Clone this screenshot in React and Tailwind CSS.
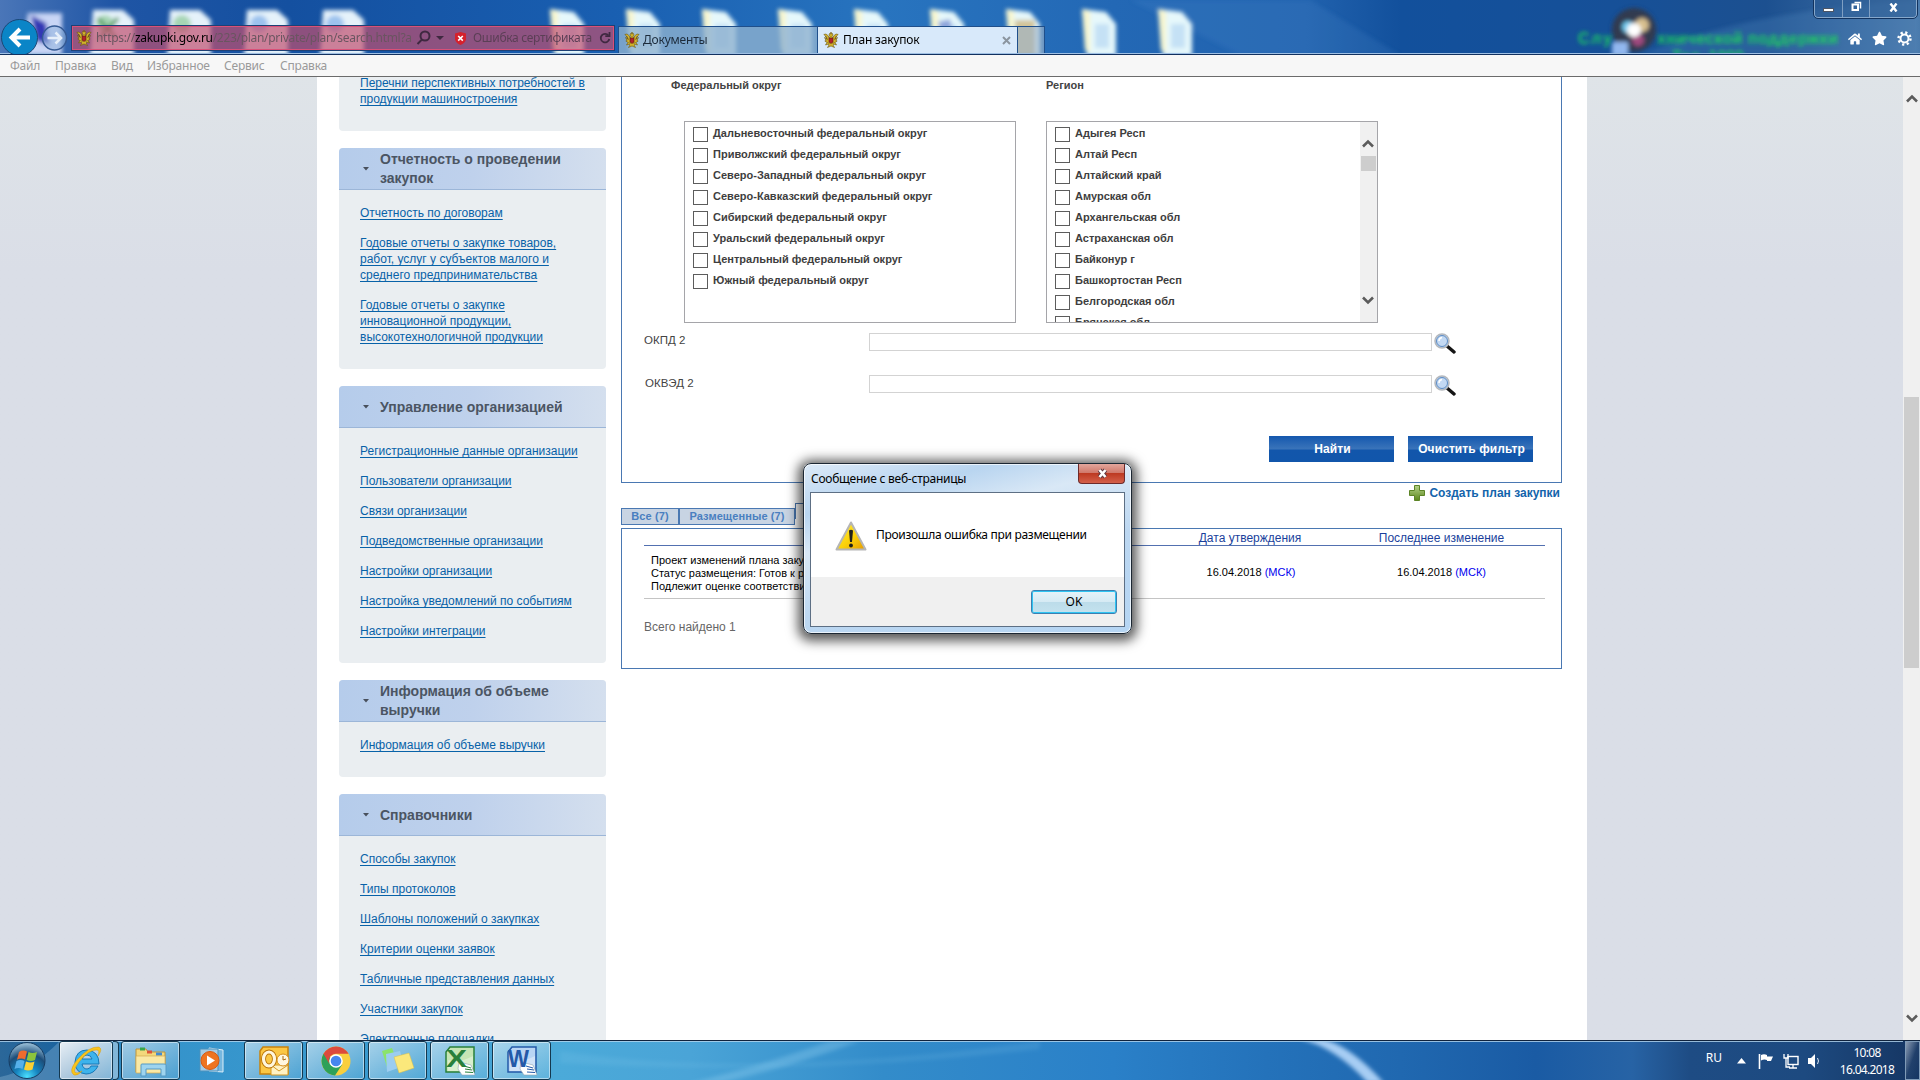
import React from 'react';
import { FaHome, FaStar } from 'react-icons/fa';

const sections = [
    {
        title: 'Отчетность о проведении закупок',
        links: [
            ['Отчетность по договорам'],
            ['Годовые отчеты о закупке товаров,', 'работ, услуг у субъектов малого и', 'среднего предпринимательства'],
            ['Годовые отчеты о закупке', 'инновационной продукции,', 'высокотехнологичной продукции'],
        ],
    },
    {
        title: 'Управление организацией',
        links: [
            ['Регистрационные данные организации'],
            ['Пользователи организации'],
            ['Связи организации'],
            ['Подведомственные организации'],
            ['Настройки организации'],
            ['Настройка уведомлений по событиям'],
            ['Настройки интеграции'],
        ],
    },
    {
        title: 'Информация об объеме выручки',
        links: [['Информация об объеме выручки']],
    },
    {
        title: 'Справочники',
        links: [
            ['Способы закупок'],
            ['Типы протоколов'],
            ['Шаблоны положений о закупках'],
            ['Критерии оценки заявок'],
            ['Табличные представления данных'],
            ['Участники закупок'],
            ['Электронные площадки'],
        ],
    },
];

const districts = [
    'Дальневосточный федеральный округ',
    'Приволжский федеральный округ',
    'Северо-Западный федеральный округ',
    'Северо-Кавказский федеральный округ',
    'Сибирский федеральный округ',
    'Уральский федеральный округ',
    'Центральный федеральный округ',
    'Южный федеральный округ',
];

const regions = [
    'Адыгея Респ',
    'Алтай Респ',
    'Алтайский край',
    'Амурская обл',
    'Архангельская обл',
    'Астраханская обл',
    'Байконур г',
    'Башкортостан Респ',
    'Белгородская обл',
    'Брянская обл',
];

const menu = [
    ['Файл', 'w-[45px]'],
    ['Правка', 'w-[56px]'],
    ['Вид', 'w-[36px]'],
    ['Избранное', 'w-[77px]'],
    ['Сервис', 'w-[56px]'],
    ['Справка', 'w-[50px]'],
];

function Eagle() {
    return (
        <svg className="h-4 w-4 shrink-0" viewBox="0 0 16 16">
            <path d="M.8 2.500L2.500 4 4 7 1.500 5.500 3 8.500 1.800 9l2.200 1.500-1.500 2.500 2.500-.8L6 13l-1.500 2.500L8 14l3.500 1.500L10 13l1-.8 2.500.8-1.500-2.500L14.200 9 13 8.500l1.500-3L12 7l1.500-3 1.700-1.500L13 2l-2.500 2-.5 2-1-1.500 1-1.500-.5-1.500L8.500 2V.5h-1V2L6.500 1.500 6 3l1 1.500L6 6l-.5-2L3 2z" fill="#d2b32a" stroke="#6b5510" strokeWidth=".6" />
            <path d="M2.500 4l2 4M13.500 4l-2 4M4.500 10.500l2 1M11.500 10.500l-2 1" stroke="#5b4a12" strokeWidth=".6" />
            <path d="M6 6h4v4L8 11.500 6 10z" fill="#b0222a" stroke="#5b1f12" strokeWidth=".6" />
        </svg>
    );
}

function DesktopBackdrop() {
    const folders = [550, 626, 702, 778, 854, 930, 1006, 1082, 1158];
    const files = [90, 167, 244, 320];
    return (
        <svg className="absolute inset-0 h-[55px] w-[1920px]" viewBox="0 0 1920 55">
            <defs>
                <linearGradient id="sky">
                    <stop offset="0" stopColor="#4a76b8" />
                    <stop offset=".06" stopColor="#1f55a5" />
                    <stop offset=".15" stopColor="#1450a0" />
                    <stop offset=".32" stopColor="#195fb1" />
                    <stop offset=".46" stopColor="#2874bf" />
                    <stop offset=".58" stopColor="#2368b5" />
                    <stop offset=".68" stopColor="#2162ae" />
                    <stop offset=".73" stopColor="#12509c" />
                    <stop offset=".84" stopColor="#165098" />
                    <stop offset=".92" stopColor="#1c5090" />
                    <stop offset="1" stopColor="#4776a8" />
                </linearGradient>
                <filter id="soft" x="-20%" y="-20%" width="140%" height="140%"><feGaussianBlur stdDeviation="2.200" /></filter>
            </defs>
            <rect width="1920" height="55" fill="url(#sky)" />
            <g filter="url(#soft)">
                <path d="M1130 0h180l90 55h-160z" fill="#5a9ad8" opacity=".15" />
                <path d="M1640 55q110-45 280-55v55z" fill="#6ba0d0" opacity=".2" />
                <path d="M28 13h34v42H22z" fill="#c9d6f5" />
                <path d="M31 15l15 8 4 22-14-4z" fill="#3039b5" />
                {files.map((x, i) => (
                    <g key={x}>
                        <path d={`M${x + 3} 10h30l11 10v36H${x}z`} fill="#e5f2fa" />
                        <circle cx={x + 15} cy="24" r="9" fill={i < 2 ? '#a6d5b4' : '#9cc2ee'} />
                    </g>
                ))}
                <path d="M98 18l18 20M118 18L98 40" stroke="#5a9f68" strokeWidth="4" />
                {folders.map((x) => (
                    <g key={x}>
                        <path d={`M${x} 9l24 3 10 12v32H${x + 5}z`} fill="#e6f8fb" />
                        <path d={`M${x} 9l8 2v42l-5-3z`} fill="#f7f6cf" />
                        <path d={`M${x + 13} 24h14v24h-14z`} fill="#c5e1f5" />
                    </g>
                ))}
                <path d="M1015 20h20v36h-20z" fill="#d2c49a" />
                <path d="M938 22l12-3 3 13-12 4z" fill="#8ea5dc" />
                <circle cx="1634" cy="30" r="22" fill="#303a50" />
                <path d="M1612 42h16v14h-16z" fill="#92b8ef" />
                <circle cx="1628" cy="27" r="6" fill="#6fc9ef" />
                <circle cx="1642" cy="25" r="7" fill="#d8c08f" />
                <circle cx="1638" cy="40" r="6" fill="#a0487f" />
                <circle cx="1634" cy="30" r="7" fill="#fff" />
            </g>
            <g fill="#1fce62" fontFamily="Liberation Sans, sans-serif" fontSize="16" fontWeight="700" filter="url(#soft)">
                <text x="1578" y="44" textLength="34">Слу</text>
                <text x="1657" y="44" textLength="181">хнической поддержки</text>
                <text x="1672" y="62" textLength="72">Тел. 1000</text>
            </g>
        </svg>
    );
}

function TitleBar() {
    return (
        <div className="relative h-[55px] shrink-0 overflow-hidden border-b border-[#12315f]">
            <DesktopBackdrop />
            <div className="relative flex h-[54px] border-b border-[#9fc0e4]">
                <div className="flex w-[72px] items-start gap-[5px] pt-[19px]">
                    <svg className="h-[37px] w-[39px] shrink-0" viewBox="0 0 39 37">
                        <circle cx="19.500" cy="18.500" r="18" fill="#0a85c7" stroke="#1d4775" />
                        <path d="M30 18.500H12M20 10l-8.500 8.500L20 27" fill="none" stroke="#fff" strokeWidth="4" />
                    </svg>
                    <svg className="mt-[6px] -ml-[3px] h-[26px] w-[27px] shrink-0" viewBox="0 0 27 26">
                        <circle cx="13.500" cy="13" r="12" fill="#8fb2dc" fillOpacity=".55" stroke="#355a94" strokeWidth="1.500" />
                        <path d="M6.500 13H20M14.500 7.500L20 13l-5.500 5.500" fill="none" stroke="#e6effa" strokeWidth="2.500" />
                    </svg>
                </div>
                <div className="mt-[26px] flex h-[24px] w-[542px] items-center border border-[#d95078] bg-[#c0506f]/70 pl-[3px] text-[12px] text-[#6a5560] outline outline-[#1d4175]">
                    <Eagle />
                    <span className="ml-[4px] w-[316px] shrink-0 whitespace-nowrap tracking-[-0.3px]">
                        https://<span className="text-black">zakupki.gov.ru</span>/223/plan/private/plan/search.html?a
                    </span>
                    <svg className="ml-1 h-4 w-4 shrink-0" viewBox="0 0 16 16" fill="none" stroke="#3f2840" strokeWidth="2">
                        <circle cx="9" cy="6" r="4.500" />
                        <path d="M6 9.500L1.500 14" />
                    </svg>
                    <svg className="ml-1 h-2 w-2 shrink-0" viewBox="0 0 8 8"><path d="M0 2h8L4 6z" fill="#3f2840" /></svg>
                    <svg className="ml-[10px] h-[13px] w-[13px] shrink-0" viewBox="0 0 13 13">
                        <path d="M1 1.500L6.500 0 12 1.500v6Q11 11 6.500 13 2 11 1 7.500z" fill="#d5212c" />
                        <path d="M4.200 4l4.600 4.600M8.800 4L4.200 8.600" stroke="#fff" strokeWidth="1.600" />
                    </svg>
                    <span className="ml-[6px] w-[119px] shrink-0 whitespace-nowrap tracking-[-0.3px] text-[#5b3f55]">Ошибка сертификата</span>
                    <svg className="ml-[7px] h-3 w-3 shrink-0" viewBox="0 0 12 12" fill="none" stroke="#3f2840" strokeWidth="1.800">
                        <path d="M9.500 3.500A4.300 4.300 0 1 0 10.300 7" />
                        <path d="M10.500 0v4.200H6.300" />
                    </svg>
                </div>
                <div className="ml-[4px] mt-[26px] flex h-[27px] text-[12px] tracking-[-0.2px]">
                    <div className="flex w-[200px] items-center gap-[3px] border border-b-0 border-[#1f4f8b] bg-[#8fb1d0]/80 pl-[5px] text-[#1c2b3b]">
                        <Eagle />
                        Документы
                    </div>
                    <div className="flex w-[200px] items-center gap-1 border-t border-r border-[#1f4f8b] bg-[#d8e9fa] pl-[5px] text-black">
                        <Eagle />
                        <span className="flex-1">План закупок</span>
                        <svg className="mr-[6px] h-[9px] w-[9px]" viewBox="0 0 9 9"><path d="M1 1l7 7M8 1L1 8" stroke="#8b959f" strokeWidth="2" /></svg>
                    </div>
                    <div className="w-[27px] border border-b-0 border-l-0 border-[#1f4f8b] bg-[#9ab0c8]/60" />
                </div>
                <div className="ml-auto flex w-[110px] flex-col">
                    <div className="ml-1 flex h-[18px] w-[103px] overflow-hidden rounded-b border border-t-0 border-[#9bb8d8]/80 bg-[#2a5a92]/50 outline outline-[#12335f]">
                        <div className="flex w-[28px] items-end justify-center border-r border-[#7f9fc3] pb-[5px]">
                            <div className="h-1 w-[11px] border border-[#4c5565] bg-white" />
                        </div>
                        <div className="flex w-[27px] items-center justify-center border-r border-[#7f9fc3]">
                            <svg className="mb-1 h-[11px] w-[11px]" viewBox="0 0 11 11" fill="none"><path d="M3.500 1.500h6v6" stroke="#fff" strokeWidth="1.500" /><rect x="1.500" y="3.500" width="5.500" height="5.500" stroke="#fff" strokeWidth="2" /></svg>
                        </div>
                        <div className="flex flex-1 items-center justify-center">
                            <svg className="mb-[2px] h-[9px] w-[11px]" viewBox="0 0 11 9"><path d="M2.500 .5l6 8M8.500 .5l-6 8" stroke="#fff" strokeWidth="2.400" /></svg>
                        </div>
                    </div>
                    <div className="mt-[13px] ml-[38px] flex items-center gap-[10px] text-white">
                        <FaHome className="h-[14px] w-[14px]" />
                        <FaStar className="h-[15px] w-[15px]" />
                        <svg className="h-[15px] w-[15px]" viewBox="0 0 15 15" fill="none" stroke="#fff">
                            <circle cx="7.500" cy="7.500" r="4" strokeWidth="2" />
                            <circle cx="7.500" cy="7.500" r="6" strokeWidth="2.400" strokeDasharray="2.200 2.512" />
                        </svg>
                    </div>
                </div>
            </div>
        </div>
    );
}

function SidebarSection({ title, links }) {
    return (
        <div className="shrink-0 overflow-hidden rounded bg-[#eaeef1]">
            <div className="flex h-[42px] items-center border-b border-[#9cb6d8] bg-gradient-to-r from-[#b5cceb] via-[#bfd1ec] to-[#d4dfee] pl-[24px]">
                <svg className="h-[4px] w-[6px] shrink-0" viewBox="0 0 6 4"><path d="M0 0h6L3 3.500z" fill="#48505c" /></svg>
                <h3 className="mt-px ml-[11px] w-[200px] text-[14px] leading-[19px] font-bold text-[#4b5563]">{title}</h3>
            </div>
            <div className="flex flex-col gap-[14px] pt-[15px] pb-6 pl-[21px] text-[12px] leading-4 text-[#0862a8]">
                {links.map((lines) => (
                    <div key={lines[0]}>
                        {lines.map((line) => (
                            <div key={line} className="whitespace-nowrap underline underline-offset-2">{line}</div>
                        ))}
                    </div>
                ))}
            </div>
        </div>
    );
}

function CheckList({ items }) {
    return (
        <div className="flex flex-col gap-[6px] pt-[5px] pl-2">
            {items.map((item) => (
                <div key={item} className="flex h-[15px] shrink-0 gap-[5px]">
                    <div className="h-[15px] w-[15px] border border-[#5c5c5c] bg-white" />
                    <span className="text-[11px] leading-[13px] font-bold whitespace-nowrap text-[#3e3e3e]">{item}</span>
                </div>
            ))}
        </div>
    );
}

function Chevron({ down }) {
    return (
        <svg className="h-[9px] w-[12px]" viewBox="0 0 12 9">
            <path d={down ? 'M1 1.500l5 5 5-5' : 'M1 7.500l5-5 5 5'} fill="none" stroke="#5b5b5b" strokeWidth="2.600" />
        </svg>
    );
}

function Magnifier() {
    return (
        <svg className="ml-[2px] h-[22px] w-[22px]" viewBox="0 0 22 22">
            <path d="M13 13l7 6" stroke="#151515" strokeWidth="3.400" strokeLinecap="round" />
            <circle cx="8" cy="8" r="7" fill="#c4d8f0" stroke="#b4b8bd" strokeWidth="1.500" />
            <circle cx="8" cy="8" r="5.500" fill="#c3d9f3" stroke="#5d8cc4" />
            <path d="M5 8q0-3 3-3.500" stroke="#fff" fill="none" strokeWidth="1.500" />
        </svg>
    );
}

function FilterField({ label, labelClass = '' }) {
    return (
        <div className="flex h-[22px] items-start">
            <span className={`w-[225px] text-[11.5px] leading-[15px] text-[#444] ${labelClass}`}>{label}</span>
            <div className="h-[18px] w-[563px] border border-[#d3d3d3] bg-white" />
            <Magnifier />
        </div>
    );
}

function FilterButton({ children }) {
    return (
        <div className="flex h-[26px] w-[125px] items-center justify-center bg-[linear-gradient(#1558ae,#3a74ba_50%,#1256ab_54%,#1156ab)] pl-[2px] text-[12px] font-bold tracking-[0.1px] whitespace-nowrap text-white">
            {children}
        </div>
    );
}

function Filter() {
    return (
        <div className="h-[406px] border border-t-0 border-[#4a78b2] text-[11px]">
            <div className="flex h-[44px] pl-[49px] font-bold text-[#444]">
                <span className="w-[375px] pt-[2px] leading-[13px]">Федеральный округ</span>
                <span className="pt-[2px] leading-[13px]">Регион</span>
            </div>
            <div className="flex gap-[30px] pl-[62px]">
                <div className="h-[202px] w-[332px] border border-[#a5a5a9]">
                    <CheckList items={districts} />
                </div>
                <div className="flex h-[202px] w-[332px] justify-between overflow-hidden border border-[#a5a5a9]">
                    <CheckList items={regions} />
                    <div className="flex w-[17px] flex-col items-center bg-[#f0f0f0] pt-[17px] pr-px pb-[17px]">
                        <Chevron />
                        <div className="mt-[8px] h-[15px] w-[15px] bg-[#cdcdcd]" />
                        <div className="mt-auto"><Chevron down /></div>
                    </div>
                </div>
            </div>
            <div className="flex flex-col gap-5 pt-[10px] pl-[22px]">
                <FilterField label="ОКПД 2" />
                <FilterField label="ОКВЭД 2" labelClass="pt-px pl-px" />
            </div>
            <div className="mt-[39px] flex justify-end gap-[14px] pr-7">
                <FilterButton>Найти</FilterButton>
                <FilterButton>Очистить фильтр</FilterButton>
            </div>
        </div>
    );
}

function PlanTable() {
    return (
        <div>
            <div className="flex h-5 items-center justify-end gap-1 pr-[2px] pb-[1px] text-[12px] font-bold text-[#1364ab]">
                <svg className="h-4 w-4" viewBox="0 0 16 16">
                    <defs>
                        <linearGradient id="plus" x2="0" y2="1"><stop stopColor="#b5d28a" /><stop offset="1" stopColor="#5b861a" /></linearGradient>
                    </defs>
                    <path d="M5.500.5h5v5h5v5h-5v5h-5v-5h-5v-5h5z" fill="url(#plus)" stroke="#5c8426" />
                </svg>
                Создать план закупки
            </div>
            <div className="flex h-[25px] items-start text-[11px] font-bold text-[#4a7fc0]">
                <div className="mt-[5px] flex h-[17px] w-[58px] items-center justify-center border border-[#4a78b2] bg-[#c8d4e3] tracking-[0.1px]">Все (7)</div>
                <div className="mt-[5px] flex h-[17px] w-[116px] items-center justify-center border border-[#4a78b2] bg-[#c8d4e3] tracking-[0.1px]">Размещенные (7)</div>
                <div className="h-[16px] w-[150px] border border-b-0 border-[#4a78b2]" />
            </div>
            <div className="h-[141px] border border-[#4a78b2] pr-[16px] pl-[22px]">
                <div className="flex h-[17px] justify-end border-b border-[#5270b0] text-[12px] leading-[18px] text-[#1a3f9c]">
                    <span className="w-[190px] text-center">Дата утверждения</span>
                    <span className="mr-[8px] ml-px w-[191px] text-center">Последнее изменение</span>
                </div>
                <div className="flex h-[53px] border-b border-[#c4c4c4] pl-[7px] text-[11px] leading-[13px] text-black">
                    <div className="flex-1 pt-[8px] whitespace-nowrap">
                        <div>Проект изменений плана закупки</div>
                        <div>Статус размещения: Готов к размещению</div>
                        <div>Подлежит оценке соответствия</div>
                    </div>
                    <span className="w-[190px] pt-5 text-center">16.04.2018 <span className="text-[#0000ee]">(МСК)</span></span>
                    <span className="mr-[8px] w-[191px] pt-5 text-center">16.04.2018 <span className="text-[#0000ee]">(МСК)</span></span>
                </div>
                <div className="pt-[20px] text-[12px] leading-4 text-[#666]">Всего найдено 1</div>
            </div>
        </div>
    );
}

function MessageDialog() {
    return (
        <div className="absolute top-[463px] left-[803px] flex h-[171px] w-[329px] flex-col rounded-lg border border-[#1c2733] bg-[linear-gradient(165deg,#dbe9f7,#b9d5f0_20%,#d9e8f6_35%,#bcd7f1_60%,#b5d5f3)] px-[6px] pb-[6px] text-[12px] text-black shadow-[0_2px_12px_5px_rgba(0,0,0,0.65)] ring-1 ring-white/70 ring-inset">
            <div className="flex h-7 items-start justify-between pl-[1px]">
                <span className="pt-[7px] leading-[16px] tracking-[-0.25px]">Сообщение с веб-страницы</span>
                <div className="flex h-[20px] w-[47px] items-center justify-center rounded-b border border-t-0 border-[#6d2a2a] bg-[linear-gradient(#e3a69c,#d17a6c_45%,#bd3a22_50%,#d4604a)] pb-px pl-px">
                    <svg className="h-[11px] w-[13px]" viewBox="0 0 13 11">
                        <path d="M3.500 2l6 7M9.500 2l-6 7" stroke="#5f3a42" strokeWidth="4.500" />
                        <path d="M3.500 2l6 7M9.500 2l-6 7" stroke="#fff" strokeWidth="2.600" />
                    </svg>
                </div>
            </div>
            <div className="flex flex-1 flex-col border border-[#5d6f84] bg-[#f0f0f0]">
                <div className="flex h-[84px] items-center bg-white pl-[24px]">
                    <svg className="mt-px h-[30px] w-[32px]" viewBox="0 0 32 30">
                        <defs>
                            <linearGradient id="warn" x2="1" y2="1"><stop stopColor="#fff04a" /><stop offset=".55" stopColor="#fbd10a" /><stop offset="1" stopColor="#e59a00" /></linearGradient>
                        </defs>
                        <path d="M16 1.500L30.500 28.500H1.500z" fill="url(#warn)" stroke="#b5b5b5" strokeWidth="2" strokeLinejoin="round" />
                        <path d="M14 9.500q2-1.500 4 0L17 21h-2z" fill="#20201c" />
                        <circle cx="16" cy="24.500" r="1.900" fill="#20201c" />
                    </svg>
                    <span className="ml-[9px] whitespace-nowrap tracking-[-0.3px]">Произошла ошибка при размещении</span>
                </div>
                <div className="flex justify-end pt-[13px] pr-[7px]">
                    <div className="flex h-6 w-[86px] items-center justify-center rounded-[3px] border border-[#3c7fb1] bg-[linear-gradient(#e6f3f9,#d5eaf4_50%,#bcdcea_52%,#c4e2ee)] ring-1 ring-[#2fc4f2] ring-inset">OK</div>
                </div>
            </div>
        </div>
    );
}

function TaskButton({ children, className = 'w-[59px] from-white/55 to-white/10' }) {
    return (
        <div className={`flex h-[39px] items-center justify-center rounded-[3px] border border-[#14384f] bg-gradient-to-br ring-1 ring-white/50 ring-inset ${className}`}>
            {children}
        </div>
    );
}

function OfficeIcon({ letter, color, light }) {
    return (
        <svg className="h-[32px] w-[32px]" viewBox="0 0 32 32">
            <path d="M6 2h24v25H2V7z" fill={light} stroke={color} strokeWidth="1.500" />
            <path d="M4 15q12 3 25-4v15H4z" fill="#fff" opacity=".35" />
            <path d="M15 17l12 3 4 10H18l-4-6z" fill="#fff" stroke="#8fa2b0" strokeWidth=".6" />
            <path d="M20 21l7 2M21 24l7 1M21 27l8 .5" stroke={color} strokeWidth="1" />
            <text x="2" y="22" fontFamily="Liberation Sans, sans-serif" fontSize="24" fontWeight="700" fill={color} textLength="21" lengthAdjust="spacingAndGlyphs">{letter}</text>
        </svg>
    );
}

function Taskbar() {
    return (
        <div className="relative h-10 shrink-0 overflow-hidden border-t border-[#10233d] bg-[linear-gradient(90deg,#2b6799,#1c639e_3%,#3492ca_7%,#3a9bd0_20%,#4baad9_29%,#4aa4d7_36%,#338cca_46%,#2a80c8_58%,#2472ba_66%,#2068b0_73%,#1a5ba4_80%,#2763a5_85%,#1e4c84_88%,#1d4a80_94%,#153562)]">
            <svg className="absolute inset-0 h-10 w-[1920px]" viewBox="0 0 1920 40">
                <path d="M0 36Q30 30 60 0v40H0z" fill="#a4c9e4" opacity=".3" />
                <path d="M1300 -2q35 8 68 44h16Q1350 4 1322 -2z" fill="#bfdfff" opacity=".85" filter="url(#soft)" />
                <path d="M690 42Q770 22 830 0h30Q790 26 720 42z" fill="#9fd8f5" opacity=".3" filter="url(#soft)" />
                <path d="M560 10q200 30 480-10v8q-240 28-480 14z" fill="#8fd0f0" opacity=".15" filter="url(#soft)" />
                <path d="M0 .5h1903" stroke="#b5d6ee" opacity=".8" />
            </svg>
            <div className="relative flex h-full items-start">
                <svg className="mt-[1px] ml-2 h-[37px] w-[38px]" viewBox="0 0 38 37">
                    <defs>
                        <radialGradient id="orb" cx=".5" cy=".95" r=".9"><stop stopColor="#4be0ff" /><stop offset=".35" stopColor="#1685c0" /><stop offset=".7" stopColor="#1c4d79" /><stop offset="1" stopColor="#8db4cf" /></radialGradient>
                    </defs>
                    <circle cx="19" cy="18.500" r="18" fill="url(#orb)" stroke="#173d63" />
                    <path d="M11 10q4-2.500 8-.5l-2 8q-4-2-8 .2z" fill="#ee6b2e" />
                    <path d="M20.500 10q4 2 8.500 0l-2 8q-4 2-8.300 0z" fill="#8cc43d" />
                    <path d="M8.500 19q4-2 8 0l-2 8q-4-2-8 0z" fill="#56b0ea" />
                    <path d="M18 19.500q4.500 2 8.500 0l-2 8q-4.500 2-8.500 0z" fill="#fcd033" />
                </svg>
                <TaskButton className="ml-[13px] w-[54px] from-white/90 to-white/40">
                    <svg className="h-[34px] w-[34px]" viewBox="0 0 34 34">
                        <path d="M29 22Q25 30 17 30 6 29 6 18 7 6 18 6q12 1 12 14H13q1 5 5 5 3 0 4-3zM13 15h10q-1-4-5-4t-5 4z" fill="#3db3ec" stroke="#1779b8" />
                        <path d="M5 31Q-1 27 8 16 20 2 30 3q4 2-1 9 2-6-1-6Q20 5 10 18q-8 11-2 11 2 0 5-2-4 5-8 4z" fill="#f8c51c" stroke="#d9960c" strokeWidth=".5" />
                    </svg>
                </TaskButton>
                <div className="h-[39px] w-[6px] rounded-r border border-l-0 border-[#14384f] bg-white/40" />
                <TaskButton className="ml-[2px] w-[59px] from-white/55 to-white/10">
                    <svg className="h-[32px] w-[34px]" viewBox="0 0 34 32">
                        <path d="M2 4h10l2 3h17v20H2z" fill="#f3d87c" stroke="#bd943a" />
                        <path d="M6 4h5" stroke="#38a64a" strokeWidth="3" />
                        <path d="M13 7h5" stroke="#dd5438" strokeWidth="3" />
                        <path d="M22 9h6" stroke="#408bd4" strokeWidth="3" />
                        <path d="M2 11h29v17H2z" fill="#fae9a5" stroke="#d1aa51" strokeWidth=".7" />
                        <path d="M7 31V20q0-1 1-1h22q2 0 2 1v11h-5v-7H12v7z" fill="#9ed4ef" stroke="#5499c4" />
                    </svg>
                </TaskButton>
                <div className="flex h-[39px] w-[64px] items-center justify-center">
                    <svg className="h-[27px] w-[27px]" viewBox="0 0 27 27">
                        <path d="M10 1l14 2v22l-14-1z" fill="#75b7df" stroke="#dceef8" />
                        <path d="M1 2h18v22H1z" fill="#a5cce5" stroke="#4a91bc" />
                        <circle cx="11" cy="13.500" r="9" fill="#ee7420" stroke="#d9590e" />
                        <path d="M8 8.500l8 5-8 5z" fill="#fff" />
                    </svg>
                </div>
                <div className="flex gap-[3px]">
                    <TaskButton>
                        <svg className="h-[32px] w-[32px]" viewBox="0 0 32 32">
                            <path d="M5 2h25v27H2V6z" fill="#fbc744" stroke="#c9830b" strokeWidth="1.500" />
                            <path d="M13 20h17v10H13z" fill="#fff2c4" stroke="#d39823" />
                            <path d="M13 20l8 6 9-6" fill="none" stroke="#d39823" />
                            <ellipse cx="11" cy="14" rx="5.500" ry="7" fill="none" stroke="#b87205" strokeWidth="5" />
                            <ellipse cx="11" cy="14" rx="5.500" ry="7" fill="none" stroke="#fff6dc" strokeWidth="3.200" />
                            <circle cx="25" cy="15" r="6" fill="#fff7df" stroke="#d7901f" />
                            <path d="M25 11v4l3-1" stroke="#a9660c" fill="none" />
                        </svg>
                    </TaskButton>
                    <TaskButton>
                        <svg className="h-[30px] w-[30px]" viewBox="0 0 30 30">
                            <circle cx="15" cy="15" r="14.500" fill="#f9cf3d" />
                            <path d="M15 15L2.500 7.700A14.500 14.500 0 0 0 14 29.500L21.200 18.600z" fill="#2da158" />
                            <path d="M2.500 7.700A14.500 14.500 0 0 1 27.600 7.800H15a7.200 7.200 0 0 0-6.300 10.700z" fill="#dc4a3d" />
                            <circle cx="15" cy="15" r="6.800" fill="#fff" />
                            <circle cx="15" cy="15" r="5.300" fill="#4686ee" />
                        </svg>
                    </TaskButton>
                    <TaskButton>
                        <svg className="h-[30px] w-[34px]" viewBox="0 0 34 30">
                            <path d="M1 5l10-3 5 13-10 6z" fill="#8be36b" />
                            <path d="M5 8l14-3 4 15-17 6z" fill="#9ccdf0" />
                            <path d="M13 11l15-4 5 15-15 5z" fill="#fbe87b" stroke="#d6bf4c" strokeWidth=".5" />
                        </svg>
                    </TaskButton>
                    <TaskButton><OfficeIcon letter="X" color="#28803b" light="#c5e6b5" /></TaskButton>
                    <TaskButton><OfficeIcon letter="W" color="#2359a8" light="#b8d5f4" /></TaskButton>
                </div>
                <div className="ml-auto flex h-full items-start text-[12px] text-white">
                    <span className="mt-[9px] text-[12px] leading-4">RU</span>
                    <svg className="mt-[17px] ml-[15px] h-[6px] w-[9px]" viewBox="0 0 9 6"><path d="M0 5.500h9L4.500 0z" fill="#fff" /></svg>
                    <svg className="mt-[12px] ml-[12px] h-[16px] w-[16px]" viewBox="0 0 16 16">
                        <path d="M1.500 1v15" stroke="#fff" strokeWidth="1.600" />
                        <path d="M3 2q3-1.500 6 0v1.500h6L13 8H9V7Q6 6 3 7.500z" fill="#fff" />
                    </svg>
                    <svg className="mt-[12px] ml-[9px] h-[16px] w-[16px]" viewBox="0 0 16 16" fill="none" stroke="#fff">
                        <rect x="5" y="3.500" width="10" height="8" strokeWidth="1.400" />
                        <path d="M10 12v3M6 15h8M1 1v4h4V1M3 5v9h4" strokeWidth="1.300" />
                    </svg>
                    <svg className="mt-[12px] ml-[9px] h-[16px] w-[14px]" viewBox="0 0 14 16">
                        <path d="M0 5h3l4-4v14l-4-4H0z" fill="#fff" />
                        <path d="M9.500 5q2 3 0 6" stroke="#dce8f4" fill="none" />
                    </svg>
                    <div className="ml-[17px] w-[56px] pt-[3px] text-center leading-[17px] tracking-[-0.7px]">
                        <div>10:08</div>
                        <div>16.04.2018</div>
                    </div>
                    <div className="ml-[10px] h-[39px] w-[15px] border border-[#7f9bb8] bg-gradient-to-br from-white/50 via-white/5 to-transparent" />
                </div>
            </div>
        </div>
    );
}

export default function App() {
    return (
        <div className="relative flex h-[1080px] w-[1920px] flex-col overflow-hidden bg-white font-['Noto_Sans','Open_Sans',sans-serif]">
            <TitleBar />
            <div className="flex h-[22px] shrink-0 items-center border-b border-[#6b6b6b] bg-[#f7f7f7] pl-[10px] text-[12px] tracking-[-0.2px] text-[#9a9a9a]">
                {menu.map(([name, width]) => (
                    <span key={name} className={`${width} whitespace-nowrap`}>{name}</span>
                ))}
            </div>
            <div className="flex h-[963px] shrink-0 overflow-hidden bg-gradient-to-b from-[#dfe4e8] to-[#dadee7] to-20% font-['Liberation_Sans',Arial,sans-serif]">
                <div className="ml-[317px] flex w-[1270px] gap-[15px] bg-white pl-[22px]">
                    <div className="flex w-[267px] shrink-0 flex-col gap-[17px]">
                        <div className="h-[54px] shrink-0 rounded-b bg-[#eaeef1] pl-[21px] text-[12px] leading-4 whitespace-nowrap text-[#0862a8] underline underline-offset-2">
                            <div className="-mt-[2px]">Перечни перспективных потребностей в</div>
                            <div>продукции машиностроения</div>
                        </div>
                        {sections.map((s) => (
                            <SidebarSection key={s.title} {...s} />
                        ))}
                    </div>
                    <div className="w-[941px]">
                        <Filter />
                        <PlanTable />
                    </div>
                </div>
                <div className="ml-auto flex w-[17px] flex-col items-center bg-[#f0f0f0] pt-[17px] pb-[17px]">
                    <Chevron />
                    <div className="mt-[294px] h-[271px] w-[15px] bg-[#cdcdcd]" />
                    <div className="mt-auto"><Chevron down /></div>
                </div>
            </div>
            <Taskbar />
            <MessageDialog />
        </div>
    );
}
